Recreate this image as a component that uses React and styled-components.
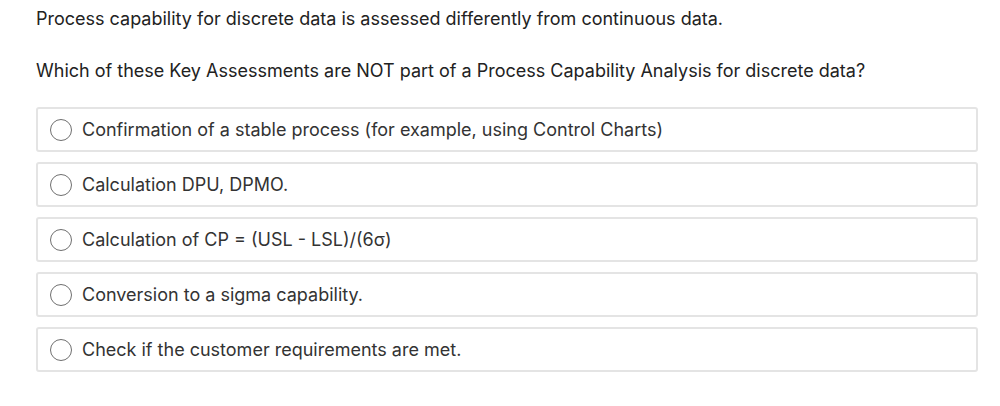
import React from "react";
import styled, { createGlobalStyle } from "styled-components";

const Global = createGlobalStyle`
  html, body { margin: 0; padding: 0; background: #ffffff; }
  body { font-family: Inter, "Noto Sans", Arial, sans-serif; }
`;

const Page = styled.div`
  padding: 6px 22px 0 36px;
  width: 942px;
`;

const Para = styled.p`
  margin: 0 0 ${(p) => p.$gap}px 0;
  font-size: 18px;
  line-height: 26px;
  color: #222222;
`;

const Options = styled.div`
  display: flex;
  flex-direction: column;
  gap: 10px;
`;

const Option = styled.label`
  box-sizing: border-box;
  display: flex;
  align-items: center;
  gap: 10px;
  height: 45px;
  padding: 0 12px;
  border: 2px solid #e4e4e4;
  border-radius: 3px;
  cursor: pointer;
  font-size: 18px;
  color: #333333;
`;

const Radio = styled.span`
  box-sizing: border-box;
  width: 22px;
  height: 22px;
  border-radius: 50%;
  border: 1px solid #6f6f6f;
  flex: none;
`;

const options = [
  "Confirmation of a stable process (for example, using Control Charts)",
  "Calculation DPU, DPMO.",
  "Calculation of CP = (USL - LSL)/(6σ)",
  "Conversion to a sigma capability.",
  "Check if the customer requirements are met.",
];

export default function App() {
  return (
    <>
      <Global />
      <Page>
        <Para $gap={26}>
          Process capability for discrete data is assessed differently from continuous data.
        </Para>
        <Para $gap={23}>
          Which of these Key Assessments are NOT part of a Process Capability Analysis for discrete data?
        </Para>
        <Options>
          {options.map((o) => (
            <Option key={o}>
              <Radio />
              {o}
            </Option>
          ))}
        </Options>
      </Page>
    </>
  );
}
